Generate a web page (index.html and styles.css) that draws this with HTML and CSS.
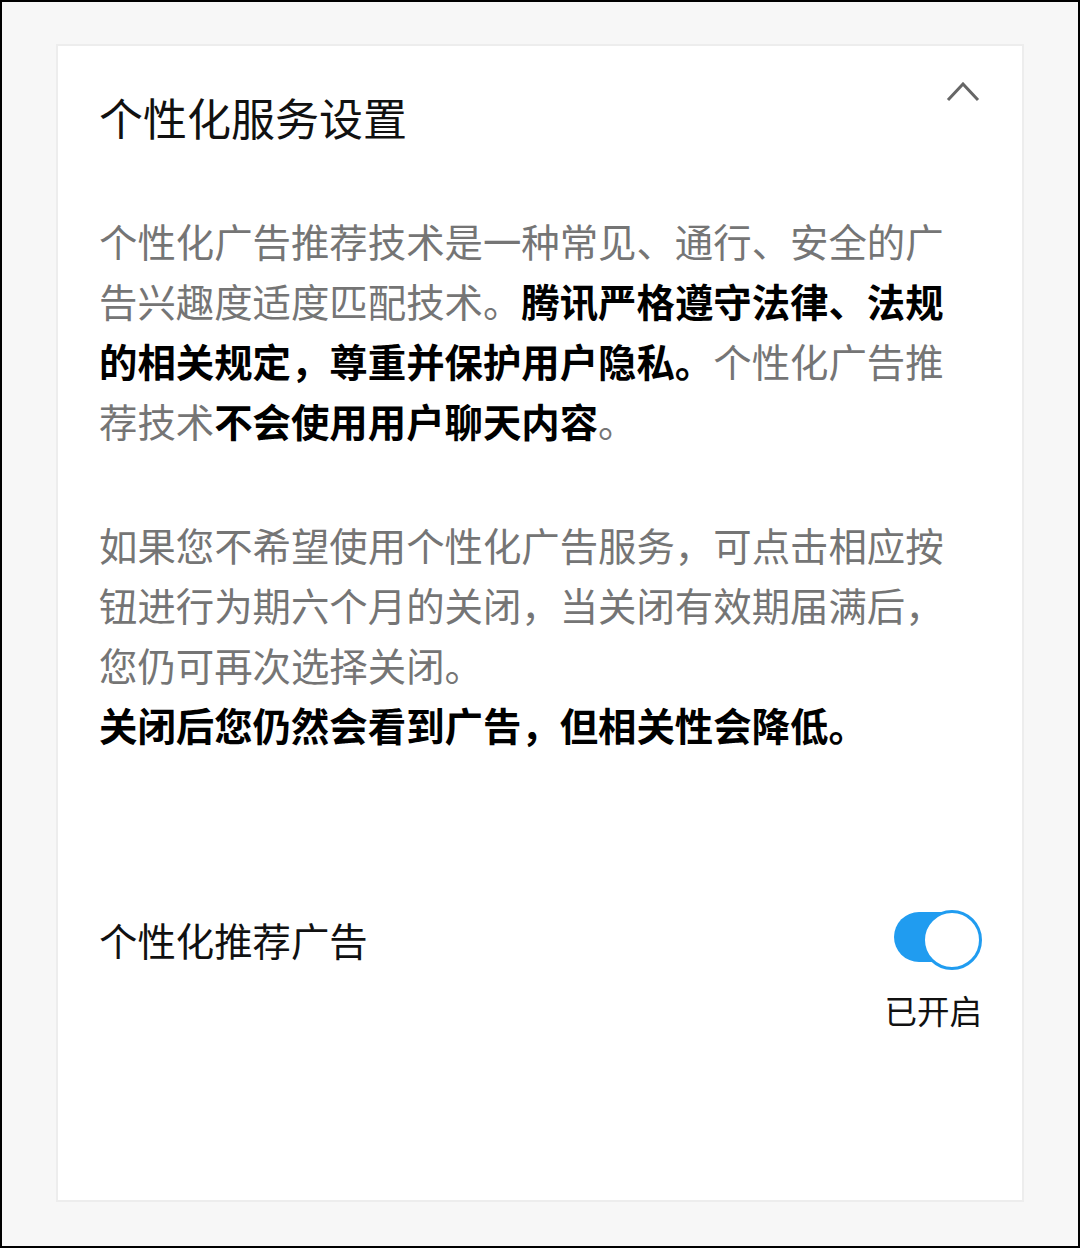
FILE: index.html
```html
<!DOCTYPE html>
<html lang="zh-CN">

<head>
  <meta charset="UTF-8">
  <meta name="viewport" content="width=device-width, initial-scale=1">
  <title>个性化服务设置</title>
  <link rel="stylesheet" href="styles.css">
</head>

<body>
  <div class="page">
    <div class="card">
      <div class="card-head">
        <h1 class="title">个性化服务设置</h1>
        <svg class="chevron" width="34" height="20" viewBox="0 0 34 20">
          <polyline points="2,18 17,2 32,18" fill="none" stroke="#666" stroke-width="3" />
        </svg>
      </div>
      <p class="desc">个性化广告推荐技术是一种常见、通行、安全的广告兴趣度适度匹配技术。<b>腾讯严格遵守法律、法规的相关规定，尊重并保护用户隐私。</b>个性化广告推荐技术<b>不会使用用户聊天内容</b>。</p>
      <p class="desc">如果您不希望使用个性化广告服务，可点击相应按钮进行为期六个月的关闭，当关闭有效期届满后，您仍可再次选择关闭。<br><b>关闭后您仍然会看到广告，但相关性会降低。</b></p>
      <div class="setting-row">
        <span class="setting-label">个性化推荐广告</span>
        <div class="setting-ctrl">
          <span class="switch on"></span>
          <span class="switch-state">已开启</span>
        </div>
      </div>
    </div>
  </div>
</body>

</html>
```

FILE: styles.css
```css
* {
  box-sizing: border-box;
}

html,
body {
  margin: 0;
  padding: 0;
}

body {
  font-family: "Noto Sans CJK SC", "Noto Sans", sans-serif;
  color: #111;
}

.page {
  width: 1080px;
  height: 1248px;
  border: 2px solid #000;
  background: #f7f7f7;
  padding: 42px 54px 44px 54px;
  display: flex;
  flex-direction: column;
}

.card {
  flex: 1;
  background: #fff;
  border: 2px solid #ededed;
  padding: 36px 40px 0 41px;
}

.card-head {
  display: flex;
  justify-content: space-between;
  align-items: flex-start;
}

.title {
  margin: 5px 0 0 0;
  font-size: 44px;
  font-weight: normal;
  line-height: 60px;
  color: #111;
}

.chevron {
  display: block;
  margin-right: 2px;
}

.desc {
  margin: 63px 0 0 0;
  max-width: 862px;
  font-size: 38.4px;
  line-height: 60px;
  color: #757575;
}

.desc + .desc {
  margin-top: 64px;
}

.desc b {
  color: #000;
  font-weight: bold;
}

.setting-row {
  margin-top: 155px;
  display: flex;
  justify-content: space-between;
  align-items: flex-start;
}

.setting-label {
  font-size: 38.4px;
  line-height: 60px;
  color: #111;
}

.setting-ctrl {
  display: flex;
  flex-direction: column;
  align-items: flex-end;
  padding-top: 1px;
}

.switch {
  position: relative;
  display: block;
  width: 88px;
  height: 54px;
}

.switch::before {
  content: "";
  position: absolute;
  left: 0;
  top: 2px;
  width: 84px;
  height: 50px;
  border-radius: 25px;
  background: #209cf0;
}

.switch::after {
  content: "";
  position: absolute;
  right: 0;
  top: 0;
  width: 54px;
  height: 54px;
  border-radius: 50%;
  border: 3px solid #209cf0;
  background: #fff;
}

.switch-state {
  margin-top: 24px;
  font-size: 32.5px;
  line-height: 44px;
  color: #111;
}
```
